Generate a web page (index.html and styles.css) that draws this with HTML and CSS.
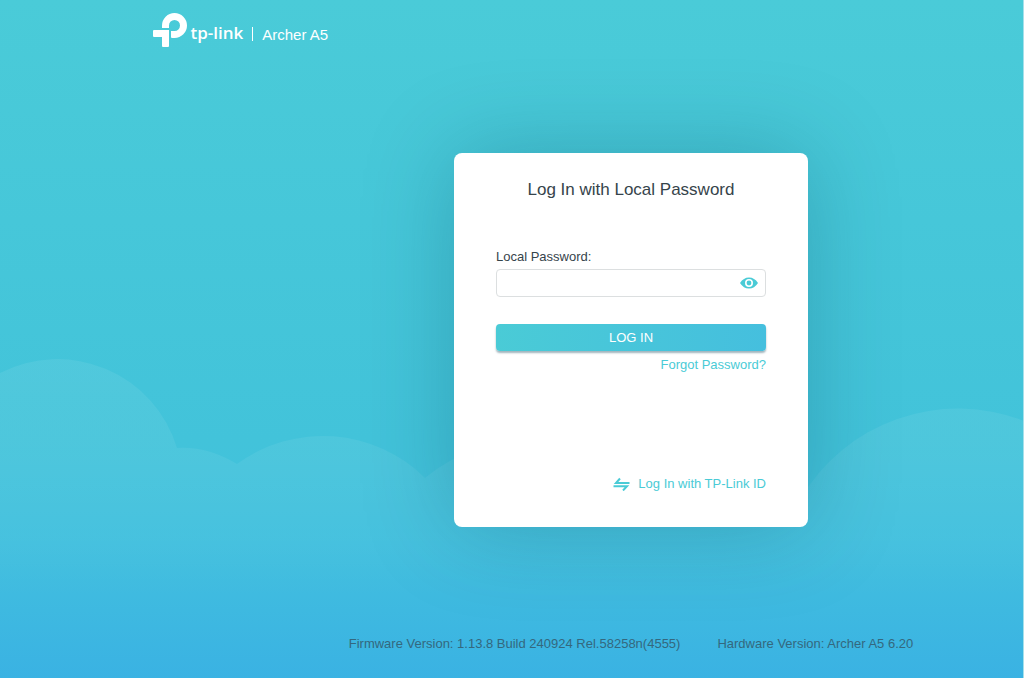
FILE: index.html
```html
<!DOCTYPE html>
<html lang="en">
<head>
    <meta charset="UTF-8">
    <meta name="viewport" content="width=device-width, initial-scale=1.0">
    <title>Archer A5</title>
    <link rel="stylesheet" href="styles.css">
</head>
<body>

<!-- Clouds -->
<svg class="clouds" viewBox="0 0 1024 328" preserveAspectRatio="xMidYMin slice" aria-hidden="true">
    <defs>
        <linearGradient id="cloud-fade" x1="0" y1="0" x2="0" y2="1">
            <stop offset="0" stop-color="#fff" stop-opacity="0.07"/>
            <stop offset="0.3" stop-color="#fff" stop-opacity="0.06"/>
            <stop offset="0.75" stop-color="#fff" stop-opacity="0"/>
        </linearGradient>
    </defs>
    <path fill="url(#cloud-fade)" d="M0 23A125 125 0 0 1 177 98Q207 96 237 114A145 145 0 0 1 425 128A150 150 0 0 1 640 150H800A182 182 0 0 1 1024 71V328H0Z"/>
</svg>

<div class="page">
    <header class="header">
        <svg class="logo" viewBox="0 0 34 34" aria-hidden="true">
            <path fill="#fff" d="M9 15V12.5A12.5 12.5 0 1 1 21.5 25H19Q18 25 18 24V18H21.5A5.5 5.5 0 1 0 16 12.5V15Z"/>
            <path fill="#fff" d="M1 17H16V33Q16 34 15 34H10Q9 34 9 33V24H1Q0 24 0 23V18Q0 17 1 17Z"/>
        </svg>
        <span class="brand">tp-link</span>
        <span class="divider"></span>
        <span class="model">Archer A5</span>
    </header>

    <main class="main">
        <form class="card">
            <h1 class="title">Log In with Local Password</h1>

            <label class="label" for="password">Local Password:</label>
            <div class="field">
                <input class="input" type="password" id="password">
                <button class="eye" type="button" aria-label="Show password">
                    <svg viewBox="0 0 18 12" width="18" height="12">
                        <path fill="#4acbd6" fill-rule="evenodd" d="M0 6Q3.500 0.500 9 0.500T18 6Q14.500 11.500 9 11.500T0 6ZM9 2A4 4 0 1 0 9 10A4 4 0 1 0 9 2Z"/>
                        <circle cx="9" cy="6" r="2.400" fill="#4acbd6"/>
                    </svg>
                </button>
            </div>

            <button class="login" type="button">LOG IN</button>
            <a class="link forgot" href="#">Forgot Password?</a>

            <a class="link switch" href="#">
                <svg viewBox="0 0 17 14" width="17" height="14" aria-hidden="true">
                    <path fill="none" stroke="#4acbd6" stroke-width="2" d="M7 1.500L3 6H16.500M0.500 9.200H14L10 13.500"/>
                </svg>
                Log In with TP-Link ID
            </a>
        </form>
    </main>

    <footer class="footer">
        <span>Firmware Version: 1.13.8 Build 240924 Rel.58258n(4555)</span>
        <span>Hardware Version: Archer A5 6.20</span>
    </footer>
</div>

</body>
</html>
```

FILE: styles.css
```css
* {
    box-sizing: border-box;
}

body {
    margin: 0;
    min-height: 100vh;
    position: relative;
    font-family: "Liberation Sans", Arial, sans-serif;
    font-size: 13px;
    color: #36444b;
    background: linear-gradient(180deg, #4acbd8 0%, #42c3da 65%, #42c0de 80%, #3ab2e3 100%);
}

/* Clouds behind the page */
.clouds {
    position: absolute;
    left: 0;
    bottom: 0;
    width: 100%;
    height: 328px;
}

.page {
    position: relative;
    min-height: 100vh;
    display: flex;
    flex-direction: column;
    border-right: 1px solid #a5e0ea;
}

/* Header */
.header {
    display: flex;
    align-items: center;
    height: 60px;
    padding-left: 15%;
    color: #fff;
}

.logo {
    width: 34px;
    height: 34px;
}

.brand {
    padding-top: 4px;
    margin-left: 3px;
    font-family: "Open Sans", sans-serif;
    font-size: 17px;
    font-weight: 600;
}

.divider {
    width: 1px;
    height: 14px;
    margin: 8px 9px 0;
    background: #fff;
}

.model {
    padding-top: 8px;
    font-size: 15px;
}

/* Login card */
.main {
    flex: 1;
    display: flex;
    justify-content: center;
    align-items: flex-start;
    padding: 93px 0 40px 239px;
}

.card {
    display: flex;
    flex-direction: column;
    width: 354px;
    min-height: 374px;
    padding: 25px 42px 34px;
    border-radius: 8px;
    background: #fff;
    box-shadow: 0 0 90px rgba(0, 60, 80, 0.26);
}

.title {
    margin: 0 0 46px;
    font-size: 17px;
    font-weight: normal;
    line-height: 24px;
    text-align: center;
}

.label {
    margin-bottom: 3px;
    line-height: 18px;
}

.field {
    display: flex;
    align-items: center;
    height: 28px;
    padding-right: 7px;
    border: 1px solid #dcdfe0;
    border-radius: 4px;
}

.input {
    flex: 1;
    min-width: 0;
    height: 100%;
    padding: 0 8px;
    border: 0;
    outline: 0;
    background: none;
    font: inherit;
}

.eye {
    display: flex;
    padding: 0;
    border: 0;
    background: none;
    cursor: pointer;
}

.login {
    height: 27px;
    margin: 27px 0 5px;
    padding: 0;
    border: 0;
    border-radius: 4px;
    background: linear-gradient(100deg, #4acbd6, #45bfde);
    box-shadow: 0 2px 2px rgba(20, 70, 90, 0.4);
    color: #fff;
    font: inherit;
    cursor: pointer;
}

.link {
    color: #4acbd6;
    line-height: 18px;
    text-decoration: none;
}

.forgot {
    align-self: flex-end;
}

.switch {
    display: flex;
    align-items: center;
    align-self: flex-end;
    gap: 8px;
    margin-top: auto;
}

/* Footer */
.footer {
    display: flex;
    justify-content: center;
    gap: 37px;
    padding: 0 0 25px 239px;
    line-height: 18px;
    color: #34687e;
}
```
